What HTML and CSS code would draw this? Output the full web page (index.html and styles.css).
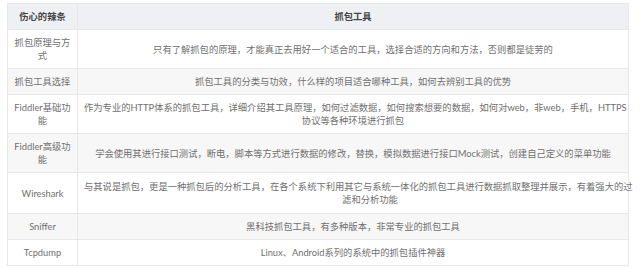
FILE: index.html
```html
<!DOCTYPE html>
<html lang="zh">
<head>
<meta charset="utf-8">
<link rel="stylesheet" href="styles.css">
</head>
<body>
<table class="tbl">
  <thead>
    <tr><th class="c1">伤心的辣条</th><th class="c2">抓包工具</th></tr>
  </thead>
  <tbody>
    <tr><td class="c1">抓包原理与方<br>式</td><td class="c2">只有了解抓包的原理，才能真正去用好一个适合的工具，选择合适的方向和方法，否则都是徒劳的</td></tr>
    <tr><td class="c1">抓包工具选择</td><td class="c2">抓包工具的分类与功效，什么样的项目适合哪种工具，如何去辨别工具的优势</td></tr>
    <tr><td class="c1">Fiddler基础功<br>能</td><td class="c2">作为专业的HTTP体系的抓包工具，详细介绍其工具原理，如何过滤数据，如何搜索想要的数据，如何对web，非web，手机，HTTPS<br>协议等各种环境进行抓包</td></tr>
    <tr><td class="c1">Fiddler高级功<br>能</td><td class="c2">学会使用其进行接口测试，断电，脚本等方式进行数据的修改，替换，模拟数据进行接口Mock测试，创建自己定义的菜单功能</td></tr>
    <tr class="tall"><td class="c1">Wireshark</td><td class="c2">与其说是抓包，更是一种抓包后的分析工具，在各个系统下利用其它与系统一体化的抓包工具进行数据抓取整理并展示，有着强大的过<br><span class="tail">滤和分析功能</span></td></tr>
    <tr><td class="c1">Sniffer</td><td class="c2">黑科技抓包工具，有多种版本，非常专业的抓包工具</td></tr>
    <tr><td class="c1">Tcpdump</td><td class="c2">Linux、Android系列的系统中的抓包插件神器</td></tr>
  </tbody>
</table>
</body>
</html>
```
FILE: styles.css
```css
html, body {
  background: #ffffff;
}
body {
  margin: 3px 0 0 7px;
  font-family: Lato, "Noto Sans CJK SC", sans-serif;
  font-size: 9.3px;
  line-height: 13px;
  color: #707070;
}
.tbl {
  width: 622px;
  border-collapse: collapse;
  table-layout: fixed;
  border: 1px solid #e6e6e6;
}
.tbl th, .tbl td {
  border: 1px solid #e8e8e8;
  padding: 6px 6px;
  text-align: center;
  white-space: nowrap;
  vertical-align: middle;
}
.tbl .c1 {
  width: 70px;
  box-sizing: border-box;
}
.tbl th {
  background: #eef0f3;
  color: #454545;
  font-weight: bold;
}
.tbl tbody tr:nth-child(even) td {
  background: #f7f7f7;
}
.tbl tr.tall td {
  padding-top: 7px;
  padding-bottom: 7px;
}
.tail {
  padding-left: 34px;
}
```
